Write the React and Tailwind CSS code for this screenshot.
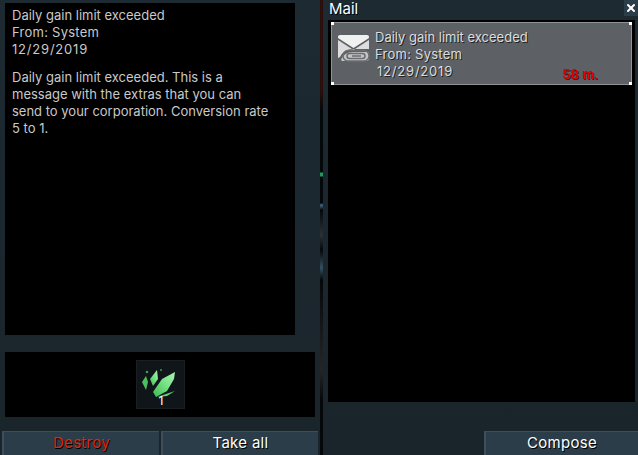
import React from 'react';
import { X } from 'lucide-react';

const font = "font-['Inter','Liberation_Sans',sans-serif]";

const MailIcon = () => (
  <svg width="33" height="28" viewBox="0 0 33 28" className="shrink-0">
    <path d="M3 1h27q2 0 2 2v1L16.500 14 1 4V3q0-2 2-2z" fill="#f0f0f0" />
    <path d="M1 6l15.500 10L32 6v9H16q-9 0-13 8l-2 1z" fill="#dcdcdc" />
    <path d="M4 26q3-8 12-8h16v6q0 3-3 3H5z" fill="#c4c4c4" />
    <g fill="none" stroke="#6a6d70" strokeWidth="1.500">
      <rect x="6" y="16.500" width="26" height="10.500" rx="5" />
      <rect x="10" y="19.500" width="18" height="5" rx="2.500" />
      <path d="M15 22h9" />
    </g>
  </svg>
);

const LeafIcon = () => (
  <svg width="49" height="49" viewBox="0 0 49 49" className="absolute -left-px -top-px">
    <defs>
      <linearGradient id="leaf" x1="0" y1="1" x2="1" y2="0">
        <stop offset="0" stopColor="#3dbb50" />
        <stop offset="0.6" stopColor="#7fe58c" />
        <stop offset="1" stopColor="#a8f0b0" />
      </linearGradient>
    </defs>
    <path d="M39 12L26 19 17 32l3 5 11-6 7-12z" fill="url(#leaf)" />
    <path d="M39 31L21 37l10-1z" fill="#5fd36f" />
    <path d="M21 10l-7 9 3 7 5-7z" fill="url(#leaf)" />
    <path d="M10 16l-4 6 4 8 2-8z" fill="#4cc05c" />
    <circle cx="11" cy="12" r="1.300" fill="#3f9d4e" />
    <circle cx="25" cy="10" r="1" fill="#3f9d4e" />
  </svg>
);

const GameButton = ({ children, className = '' }) => (
  <button className={`h-6 bg-[#2a3d48] border-l-2 border-t border-[#3d4f5a] text-[15px] tracking-[0.3px] leading-[21px] pb-[3px] [text-shadow:1px_1px_0_#000] ${className}`}>
    {children}
  </button>
);

const Corner = ({ className }) => <span className={`absolute w-[3px] h-[3px] bg-white ${className}`} />;

export default function App() {
  return (
    <div className={`flex w-[638px] h-[455px] overflow-hidden bg-[linear-gradient(180deg,#1d2a32,#1a242b)] text-[#c9c9c9] ${font}`}>
      {/* Letter panel */}
      <div className="w-[320px] shrink-0 flex flex-col pt-[3px]">
        <div className="ml-[5px] w-[290px] h-[332px] bg-black px-[7px] pt-1 text-[13px] leading-[17px]">
          <p>Daily gain limit exceeded</p>
          <p className="tracking-[0.25px]">From: System</p>
          <p className="tracking-[0.8px]">12/29/2019</p>
          <p className="mt-[11px]">
            Daily gain limit exceeded. This is a<br />
            message with the extras that you can<br />
            send to your corporation. Conversion rate<br />
            5 to 1.
          </p>
        </div>
        <div className="ml-[5px] mt-[17px] w-[310px] h-[65px] bg-black flex items-center justify-center">
          <div className="relative w-[49px] h-[49px] bg-[#0f1518] border border-[#1a1f22]">
            <LeafIcon />
            <span className="absolute left-[2px] right-0 bottom-0 text-center text-[12px] leading-[14px] text-white">1</span>
          </div>
        </div>
        <div className="flex gap-[2px] ml-[2px] mt-[14px]">
          <GameButton className="w-[157px] text-[#e0260f]">Destroy</GameButton>
          <GameButton className="w-[157px] text-white">Take all</GameButton>
        </div>
      </div>

      {/* Divider strip with the game scene showing through */}
      <div className="w-[3px] shrink-0 bg-[linear-gradient(180deg,#2a0f0c_0,#2a0f0c_90px,#05080a_110px,#05080a_172px,#1f9a5a_173px,#1f9a5a_176px,#05080a_177px,#05080a_203px,#3f6a85_205px,#05080a_210px,#2a3138_235px,#05080a_250px,#34505f_268px,#05080a_280px,#22262a_370px,#05080a_400px)]" />

      {/* Mail list */}
      <div className="flex-1 flex flex-col relative">
        <div className="h-5 pl-[6px] text-[15px] leading-[18px] text-white [text-shadow:1px_1px_0_#000]">Mail</div>
        <button className="absolute top-0 right-0 w-[14px] h-4 bg-[#2a3d48] flex items-center justify-center text-white">
          <X size={12} strokeWidth={4} />
        </button>
        <div className="ml-[5px] mr-[3px] h-[382px] bg-black px-[3px] pt-[2px]">
          <div className="relative h-[63px] bg-[#5d6166] border border-[#8f9397] flex gap-[5px] pl-[5px] pt-[6px] text-[13px] leading-[17px] text-[#dcdcdc] [text-shadow:1px_1px_0_#222]">
            <Corner className="-left-px -top-px" />
            <Corner className="-right-px -top-px" />
            <Corner className="-left-px -bottom-px" />
            <Corner className="-right-px -bottom-px" />
            <div className="pt-[5px]"><MailIcon /></div>
            <div>
              <p>Daily gain limit exceeded</p>
              <p className="tracking-[0.25px]">From: System</p>
              <p className="ml-[2px] tracking-[0.8px]">12/29/2019</p>
            </div>
            <span className="absolute right-[33px] bottom-[1px] text-[13px] font-semibold text-[#e00000] [text-shadow:1px_1px_0_#222]">58 m.</span>
          </div>
        </div>
        <div className="flex justify-end mt-[29px]">
          <GameButton className="w-[154px] text-white">Compose</GameButton>
        </div>
      </div>
    </div>
  );
}
